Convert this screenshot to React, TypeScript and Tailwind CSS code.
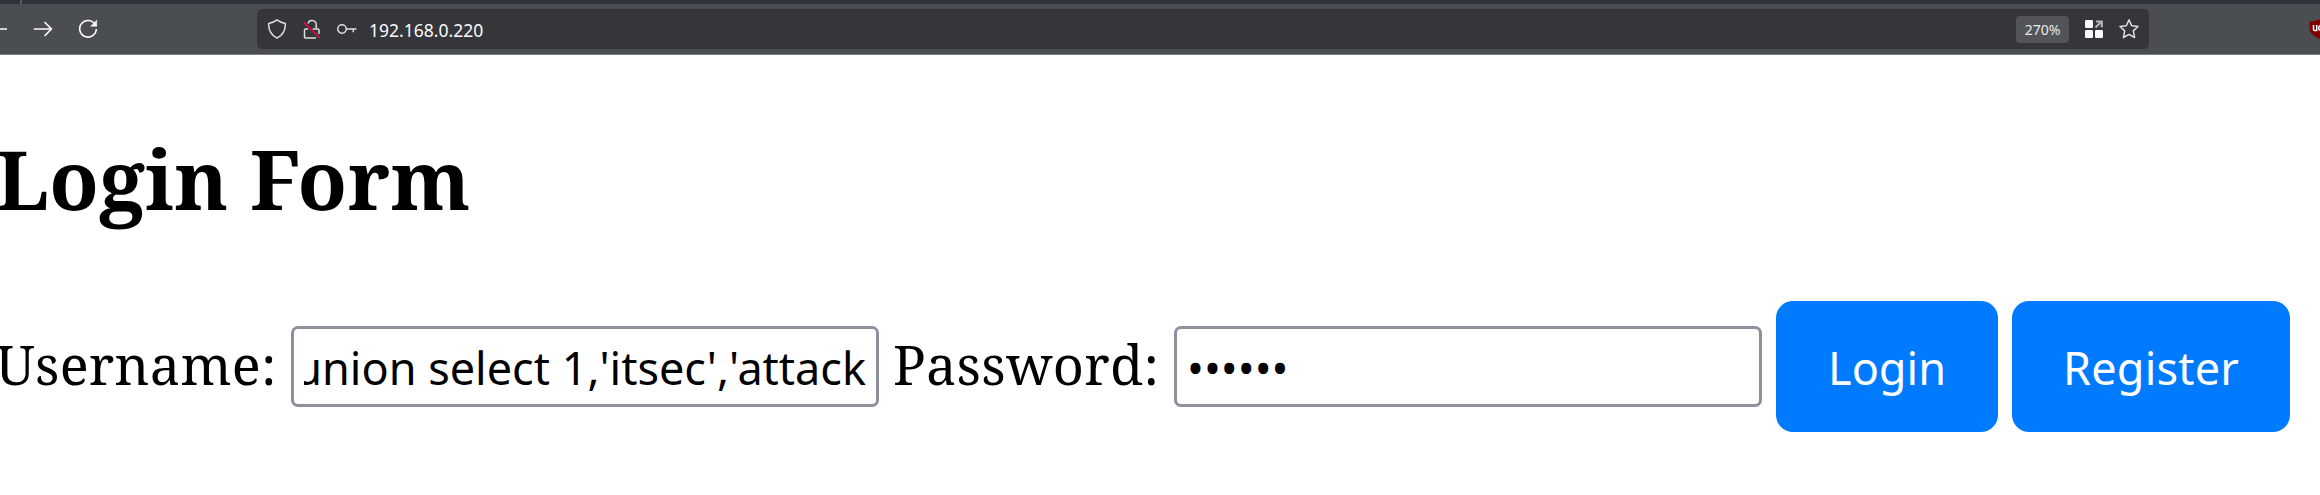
import type { ReactNode } from "react";

function Icon({ className, children }: { className: string; children: ReactNode }) {
  return (
    <svg
      viewBox="0 0 20 20"
      fill="none"
      stroke="currentColor"
      strokeWidth="1.5"
      strokeLinecap="round"
      strokeLinejoin="round"
      className={"block h-5 w-5 shrink-0 " + className}
    >
      {children}
    </svg>
  );
}

function TabStrip() {
  return (
    <div className="flex h-1 shrink-0 bg-[#2f3238]">
      <div className="ml-5 w-0.5 bg-[#5b5e63]" />
    </div>
  );
}

function UrlBar() {
  return (
    <div className="flex h-10 w-[1892px] shrink-0 items-center rounded-[5px] bg-[#35363a] text-[#dededf]">
      <Icon className="ml-[10px]">
        <path d="M10 .9c2.4 1.9 5 3.1 8.3 3.5.3 6.2-2.1 11.5-8.3 14.7C3.8 15.9 1.4 10.6 1.7 4.4 5 4 7.6 2.8 10 .9z" />
      </Icon>
      <Icon className="ml-[15px]">
        <path d="M6 4.5a4.2 4.2 0 0 1 8.2 1.300V9M10.800 10H16a1 1 0 0 1 1 1v4M6 10H3.500a1 1 0 0 0-1 1v7a1 1 0 0 0 1 1H14" strokeLinecap="butt" />
        <path d="M1.500 3.200 17.800 19" stroke="#e4093f" strokeWidth="1.700" strokeLinecap="butt" />
      </Icon>
      <Icon className="ml-[15px]">
        <circle cx="5" cy="10" r="4.2" />
        <path d="M9.200 10H19.500M16.300 10v3.300" strokeLinecap="butt" />
      </Icon>
      <span className="ml-[12px] pt-[2px] text-[17.5px] leading-6 text-[#fbfbfe]">192.168.0.220</span>
      <span className="ml-auto flex h-[27px] w-[53px] items-center justify-center rounded bg-[#535458] pt-px text-[14px] leading-5 text-[#e8e8ea]">
        270%
      </span>
      <svg viewBox="0 0 18 18" className="ml-4 block h-[18px] w-[18px] shrink-0">
        <rect width="8" height="8" rx="1.3" fill="#fbfbfe" />
        <rect y="10" width="8" height="8" rx="1.3" fill="#fbfbfe" />
        <rect x="10" y="10" width="8" height="8" rx="1.3" fill="#fbfbfe" />
        <path d="M11 1.500h5.800v5.800M16.500 1.500l-6 6" stroke="#b4b4b6" strokeWidth="2.200" fill="none" />
      </svg>
      <Icon className="mr-[10px] ml-4">
        <path d="m10 .9 2.700 5.900 6.300.7-4.700 4.400 1.300 6.600L10 15.300l-5.600 3.200 1.300-6.600L1 7.500l6.300-.7z" />
      </Icon>
    </div>
  );
}

function Toolbar() {
  return (
    <div className="flex h-[51px] shrink-0 items-center overflow-hidden border-b border-[#7d7f83] bg-[#4a4d51] text-[#fbfbfe]">
      <Icon className="-ml-[13px]">
        <path d="M20 10H2" />
      </Icon>
      <Icon className="ml-[26px]">
        <path d="M1.500 10H18M12 3.500l6.500 6.500-6.500 6.500" strokeWidth="1.700" />
      </Icon>
      <Icon className="ml-[25px]">
        <path d="M17 5.300A8.300 8.300 0 1 0 18.300 10" strokeWidth="1.600" strokeLinecap="butt" />
        <path d="M18.700 1.500v5.700H13z" fill="currentColor" strokeWidth=".6" />
      </Icon>
      <div className="ml-[159px] flex">
        <UrlBar />
      </div>
      <div className="ml-[160px] flex h-5 w-5 shrink-0">
        <svg viewBox="0 0 20 20" className="block h-5 w-5">
          <path d="M10 .3C7 2 4 2.300.5 2.500v6.500c0 5.500 5 8.500 9.500 10.700 4.500-2.200 9.500-5.200 9.500-10.700V2.500C16 2.300 13 2 10 .3z" fill="#800000" />
          <path d="M4.500 6v4.300q0 1.200 1.200 1.200h2V6" stroke="#fff" strokeWidth="1.500" fill="none" />
          <circle cx="12" cy="9" r="2.300" stroke="#fff" strokeWidth="1.500" fill="none" />
        </svg>
      </div>
    </div>
  );
}

function Field({ children }: { children: ReactNode }) {
  return (
    <div className="flex h-[81px] w-[588px] shrink-0 rounded-[7px] border-3 border-[#8f8f9d] bg-white px-[10px] font-['Noto_Sans',sans-serif] text-[45px] leading-[77px]">
      {children}
    </div>
  );
}

function Label({ className, children }: { className: string; children: ReactNode }) {
  return (
    <label className={"shrink-0 pb-[5px] text-[54px] leading-[74px] tracking-[0.3px] whitespace-nowrap " + className}>
      {children}
    </label>
  );
}

function Button({ className, children }: { className: string; children: ReactNode }) {
  return (
    <button
      type="button"
      className={
        "ml-[14px] h-[131px] shrink-0 rounded-[17px] bg-[#007bff] pt-[2px] font-['Noto_Sans',sans-serif] text-[45px] leading-[61px] text-white " +
        className
      }
    >
      {children}
    </button>
  );
}

export default function App() {
  return (
    <div className="flex h-[495px] w-[2320px] flex-col overflow-hidden bg-white font-['Noto_Sans',sans-serif]">
      <TabStrip />
      <Toolbar />
      <main className="flex flex-col overflow-hidden font-['Noto_Serif',serif] text-black">
        <h1 className="mt-[69px] -ml-[4px] text-[81px] leading-[110px] font-bold tracking-[0.4px] whitespace-nowrap">
          Login Form
        </h1>
        <form className="mt-[67px] flex h-[131px] items-center">
          <Label className="-ml-[4px] w-[295px]">Username:</Label>
          <Field>
            <div className="flex min-w-0 flex-1 justify-end overflow-hidden whitespace-pre">union select 1,'itsec','attack</div>
          </Field>
          <Label className="ml-[14px] w-[281px]">Password:</Label>
          <Field>••••••</Field>
          <Button className="w-[222px]">Login</Button>
          <Button className="w-[278px] tracking-[0.2px]">Register</Button>
        </form>
      </main>
    </div>
  );
}
